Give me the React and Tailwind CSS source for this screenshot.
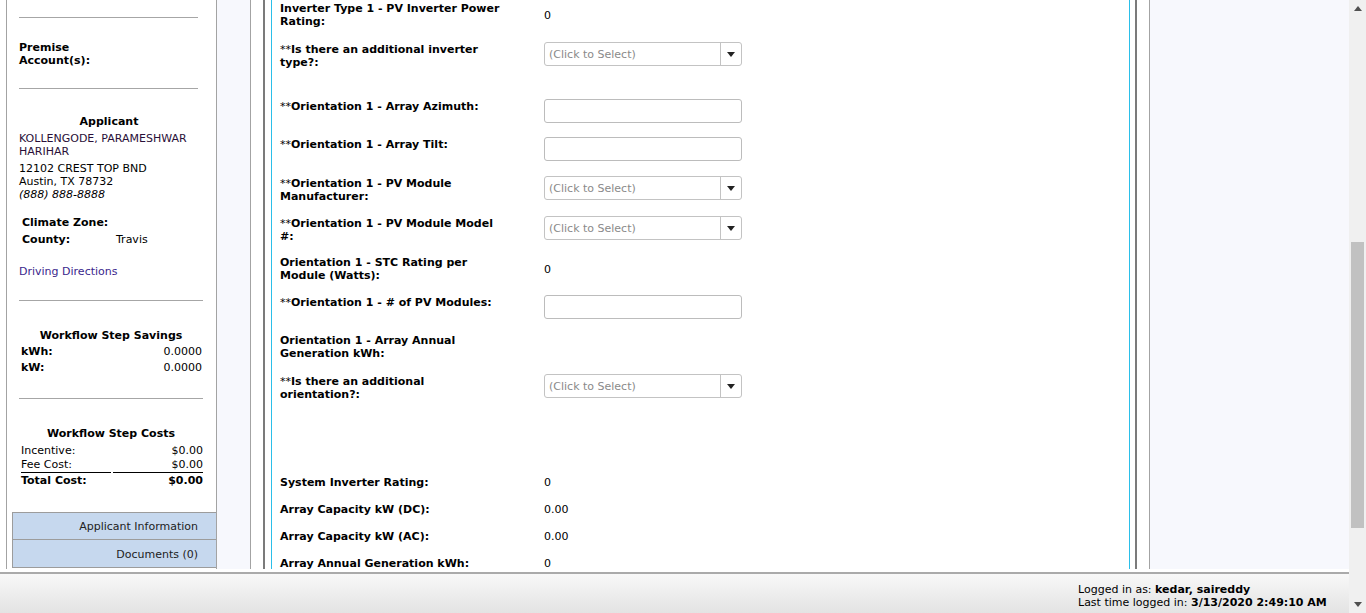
import React from "react"

const rows = [
  { label: ["Inverter Type 1 - PV Inverter Power", "Rating:"], value: "0", mt: "mt-[2px]" },
  { star: true, label: ["Is there an additional inverter", "type?:"], kind: "select", mt: "mt-[14px]" },
  { star: true, label: ["Orientation 1 - Array Azimuth:"], kind: "input", mt: "mt-[31px]" },
  { star: true, label: ["Orientation 1 - Array Tilt:"], kind: "input", mt: "mt-[14px]" },
  { star: true, label: ["Orientation 1 - PV Module", "Manufacturer:"], kind: "select", mt: "mt-[15px]" },
  { star: true, label: ["Orientation 1 - PV Module Model", "#:"], kind: "select", mt: "mt-[14px]" },
  { label: ["Orientation 1 - STC Rating per", "Module (Watts):"], value: "0", mt: "mt-[14px]" },
  { star: true, label: ["Orientation 1 - # of PV Modules:"], kind: "input", mt: "mt-[13px]" },
  { label: ["Orientation 1 - Array Annual", "Generation kWh:"], mt: "mt-[15px]" },
  { star: true, label: ["Is there an additional", "orientation?:"], kind: "select", mt: "mt-[14px]" },
  { label: ["System Inverter Rating:"], value: "0", mt: "mt-[76px]" },
  { label: ["Array Capacity kW (DC):"], value: "0.00", mt: "mt-[14px]" },
  { label: ["Array Capacity kW (AC):"], value: "0.00", mt: "mt-[14px]" },
  { label: ["Array Annual Generation kWh:"], value: "0", mt: "mt-[14px]" },
]

function Caret({ className }) {
  return (
    <svg width="8" height="5" viewBox="0 0 8 5" className={className}>
      <path d="M0 0 H8 L4 5 Z" fill="currentColor" />
    </svg>
  )
}

function SelectBox() {
  return (
    <div className="flex h-[24px] w-[198px] rounded-[3px] border border-[#c3c3c3] bg-white">
      <div className="flex-1 pl-[4px] pt-[1px] leading-[22px] text-[#8a8a8a]">(Click to Select)</div>
      <div className="flex w-[21px] items-center justify-center border-l border-[#c3c3c3] text-[#222]">
        <Caret />
      </div>
    </div>
  )
}

function TextBox() {
  return <div className="h-[24px] w-[198px] rounded-[3px] border border-[#bcbcbc] bg-white" />
}

function FormRow({ row }) {
  return (
    <div className={`flex items-start ${row.mt}`}>
      <div
        className={
          row.kind
            ? "-mb-[1px] w-[264px] whitespace-nowrap pt-[1px] font-bold leading-[13px]"
            : "w-[264px] whitespace-nowrap font-bold leading-[13px]"
        }
      >
        {row.star && <span className="font-normal">**</span>}
        {row.label.map((line, i) => (
          <React.Fragment key={i}>
            {i > 0 && <br />}
            {line}
          </React.Fragment>
        ))}
      </div>
      {row.kind === "select" && <SelectBox />}
      {row.kind === "input" && <TextBox />}
      {row.value && <div className="self-center leading-[13px]">{row.value}</div>}
    </div>
  )
}

function LeftPanel() {
  return (
    <div className="w-[211px] shrink-0 border-x border-[#a3a3a3] bg-white">
      <div className="pl-[12px]">
        <div className="mt-[17px] h-px w-[179px] bg-[#a6a6a6]" />
        <div className="mt-[23px] font-bold leading-[13px]">
          Premise
          <br />
          Account(s):
        </div>
        <div className="mt-[21px] h-px w-[179px] bg-[#a6a6a6]" />
        <div className="mt-[26px] w-[180px] text-center font-bold leading-[13px]">Applicant</div>
        <div className="mt-[4px] leading-[13px] text-[#2a0f38]">
          KOLLENGODE, PARAMESHWAR
          <br />
          HARIHAR
        </div>
        <div className="mt-[4px] leading-[13px]">
          12102 CREST TOP BND
          <br />
          Austin, TX 78732
          <br />
          <span className="italic">(888) 888-8888</span>
        </div>
        <div className="mt-[13px] pl-[3px]">
          <div className="flex h-[17px] leading-[17px]">
            <span className="w-[94px] font-bold">Climate Zone:</span>
          </div>
          <div className="flex h-[17px] leading-[17px]">
            <span className="w-[94px] font-bold">County:</span>
            <span>Travis</span>
          </div>
        </div>
        <div className="mt-[17px] leading-[13px] text-[#3a1f8c]">Driving Directions</div>
        <div className="mt-[22px] h-px w-[184px] bg-[#a6a6a6]" />
        <div className="mt-[28px] w-[184px] text-center font-bold leading-[13px]">Workflow Step Savings</div>
        <div className="mt-[2px] w-[184px] pl-[2px] pr-[1px]">
          <div className="flex h-[16px] justify-between leading-[16px]">
            <span className="font-bold">kWh:</span>
            <span>0.0000</span>
          </div>
          <div className="flex h-[16px] justify-between leading-[16px]">
            <span className="font-bold">kW:</span>
            <span>0.0000</span>
          </div>
        </div>
        <div className="mt-[22px] h-px w-[184px] bg-[#a6a6a6]" />
        <div className="mt-[28px] w-[184px] text-center font-bold leading-[13px]">Workflow Step Costs</div>
        <div className="mt-[3px] grid w-[184px] grid-cols-[90px_90px] gap-x-[2px] pl-[2px]">
          <div className="h-[15px] leading-[15px]">Incentive:</div>
          <div className="h-[15px] text-right leading-[15px]">$0.00</div>
          <div className="h-[15px] border-b border-black leading-[14px]">Fee Cost:</div>
          <div className="h-[15px] border-b border-black text-right leading-[14px]">$0.00</div>
          <div className="h-[16px] font-bold leading-[16px]">Total Cost:</div>
          <div className="h-[16px] text-right font-bold leading-[16px]">$0.00</div>
        </div>
      </div>
      <div className="ml-[5px] mt-[23px]">
        <div className="h-[28px] border border-r-0 border-[#9c9c9c] bg-[#c6d8ee] pr-[18px] text-right leading-[28px] text-[#222]">
          Applicant Information
        </div>
        <div className="h-[28px] border border-r-0 border-t-0 border-[#9c9c9c] bg-[#c6d8ee] pr-[18px] pt-[1px] text-right leading-[27px] text-[#222]">
          Documents (0)
        </div>
      </div>
    </div>
  )
}

function MainPanel() {
  return (
    <div className="flex w-[900px] shrink-0 border-x border-[#a3a3a3] bg-white px-[12px]">
      <div className="flex flex-1 border-x-2 border-[#7b7b7b] pl-[6px] pr-[5px]">
        <div className="flex-1 border-x border-[#2bbfe9] pl-[8px]">
          {rows.map((row, i) => (
            <FormRow key={i} row={row} />
          ))}
        </div>
      </div>
    </div>
  )
}

function Scrollbar() {
  return (
    <div className="flex h-full w-[17px] shrink-0 flex-col items-center bg-[#f0f0f0] text-[#505050]">
      <div className="flex h-[17px] items-center justify-center">
        <Caret className="rotate-180" />
      </div>
      <div className="mt-[225px] h-[286px] w-[13px] bg-[#c1c1c1]" />
      <div className="mt-auto flex h-[17px] items-center justify-center">
        <Caret />
      </div>
    </div>
  )
}

export default function App() {
  return (
    <div className="flex h-[613px] w-[1366px] overflow-hidden bg-white font-['DejaVu_Sans',sans-serif] text-[11px] text-black">
      <div className="flex w-[1349px] flex-col">
        <div className="flex h-[569px] overflow-hidden">
          <div className="w-[6px] shrink-0 bg-white" />
          <LeftPanel />
          <div className="w-[33px] shrink-0 bg-[#f7f8fd]" />
          <MainPanel />
          <div className="flex-1 bg-[#f7f8fd]" />
        </div>
        <div className="h-[3px] bg-white" />
        <div className="flex h-[41px] justify-end border-t-2 border-[#aaaaaa] bg-gradient-to-b from-[#f8f8f8] to-[#e3e3e3] pr-[20px] pt-[9px]">
          <div className="w-[251px] leading-[13px]">
            Logged in as: <span className="font-bold">kedar, saireddy</span>
            <br />
            Last time logged in: <span className="font-bold">3/13/2020 2:49:10 AM</span>
          </div>
        </div>
      </div>
      <Scrollbar />
    </div>
  )
}
